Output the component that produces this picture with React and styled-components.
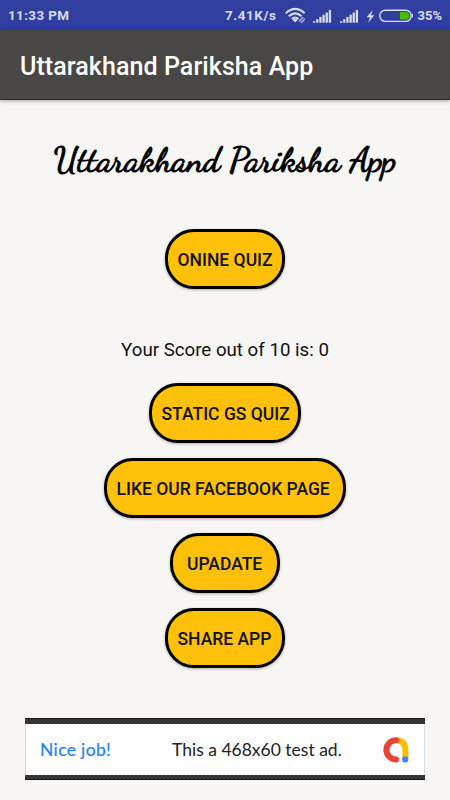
import React from 'react';
import styled, { createGlobalStyle } from 'styled-components';

const GlobalStyle = createGlobalStyle`
  * {
    box-sizing: border-box;
  }
  body {
    margin: 0;
    background: #f7f6f4;
    font-family: Roboto, "Liberation Sans", sans-serif;
  }
`
const SCREEN = styled.div`
  display: flex;
  flex-direction: column;
  width: 450px;
  height: 800px;
  overflow: hidden;
  background: #f7f6f4;
`
const STATUSBAR = styled.div`
  display: flex;
  flex: none;
  align-items: center;
  height: 30px;
  padding: 1px 8px 0 8px;
  background: #303f9f;
  color: #d9dcf0;
  font-size: 13.4px;
  font-weight: 700;
  white-space: nowrap;
`
const CLOCK = styled.div`
  flex: 1;
  letter-spacing: 0.4px;
`
const SPEED = styled.div`
  width: 60px;
  letter-spacing: 0.6px;
`
const STATUSICONS = styled.svg`
  display: block;
  width: 128px;
  height: 28px;
`
const PERCENT = styled.div`
  width: 29px;
  text-align: right;
  font-size: 13px;
`
const TOOLBAR = styled.header`
  display: flex;
  flex: none;
  align-items: center;
  height: 70px;
  padding: 4px 20px 0;
  background: #484745;
  border-bottom: 1px solid #2f2e2d;
  box-shadow: 0 1px 4px rgba(0, 0, 0, 0.35);
  color: white;
  font-size: 25px;
  font-weight: 500;
  letter-spacing: 0.08px;
  white-space: nowrap;
`
const CONTENT = styled.main`
  display: flex;
  flex: 1;
  flex-direction: column;
  align-items: center;
`
const TITLE = styled.h1`
  margin: 35px 0 0;
  height: 50px;
  font-family: "Dancing Script", "Liberation Serif", cursive;
  font-size: 35px;
  font-weight: 400;
  line-height: 50px;
  color: black;
  -webkit-text-stroke: 1px black;
  white-space: nowrap;
`
const SCORE = styled.p`
  margin: 49px 0 20px;
  height: 25px;
  font-size: 18.7px;
  line-height: 25px;
  color: #111;
  white-space: nowrap;
`
const BUTTON = styled.button`
  display: flex;
  align-items: center;
  justify-content: flex-start;
  flex: none;
  width: ${props => props.$width}px;
  height: 60px;
  padding: 1px 0 0 ${props => props.$indent || 9.5}px;
  border: 3.5px solid black;
  border-radius: 29px;
  background: #ffc107;
  box-shadow: 0 1px 3px rgba(0, 0, 0, 0.3);
  color: #111;
  font-family: Roboto, "Liberation Sans", sans-serif;
  font-size: 17.5px;
  font-weight: 500;
  white-space: nowrap;
`
const FIRSTBUTTON = styled(BUTTON)`
  margin-top: 44px;
`
const BUTTONLIST = styled.div`
  display: flex;
  flex-direction: column;
  align-items: center;
  gap: 15px;
`
const AD = styled.div`
  flex: none;
  width: 400px;
  height: 62px;
  margin-top: 50px;
  padding: 5px 0 4px;
  background: repeating-conic-gradient(#2b2b2b 0% 25%, #414141 0% 50%) 0 0 / 4px 4px;
  border-top: 1px solid #1a1a1a;
  border-bottom: 1px solid #1a1a1a;
`
const ADBODY = styled.div`
  display: flex;
  align-items: center;
  height: 100%;
  padding: 0 14px 0 14px;
  background: #fefefe;
  border: solid #d5dce1;
  border-width: 0 1px;
  font-family: Lato, "Liberation Sans", sans-serif;
  font-size: 17.5px;
  white-space: nowrap;
`
const ADLINK = styled.div`
  width: 132px;
  color: #2680f5;
  letter-spacing: 0.35px;
  -webkit-text-stroke: 0.2px #2680f5;
`
const ADTEXT = styled.div`
  flex: 1;
  color: #222;
`
const ADLOGO = styled.svg`
  display: block;
  width: 28px;
  height: 28px;
`

function StatusIcons() {
  return (
    <STATUSICONS viewBox="0 0 128 28" fill="none">
      <g stroke="#d9dcf0" strokeWidth="2">
        <path d="M0.8 11.2Q10.2 2.6 19.6 11.2" />
        <path d="M3.8 14.3Q10.2 8.4 16.6 14.3" />
        <path d="M6.8 17.1Q10.2 14 13.6 17.1" />
      </g>
      <path d="M7.5 17.8L10.2 20.5L12.9 17.8Q10.2 15.8 7.5 17.8Z" fill="#d9dcf0" />
      <path d="M14.4 19.3L17.9 15.6M16.4 20.4L19.4 17.2" stroke="#aab0dc" strokeWidth="1.5" strokeLinecap="round" />
      <SignalBars x={28} />
      <SignalBars x={55} />
      <path d="M87.8 8L81.6 15.3H85L83.2 20.8L89.3 13.2H86Z" fill="#d9dcf0" />
      <rect x="94.7" y="8.2" width="31.5" height="11.2" rx="5.6" stroke="#d9dcf0" strokeWidth="1.4" />
      <path d="M115 10H120.5A3.8 3.8 0 0 1 120.5 17.6H115Z" fill="#45bf08" />
      <path d="M127.3 12V15.6" stroke="#d9dcf0" strokeWidth="1.2" />
    </STATUSICONS>
  )
}

function SignalBars(props) {
  return (
    <g fill="#d9dcf0">
      {[1.5, 3.5, 5.8, 8, 10.2, 12.8].map((height, i) => (
        <rect key={i} x={props.x + i * 3.15} y={20.7 - height} width="2.3" height={height} />
      ))}
    </g>
  )
}

function AdLogo() {
  return (
    <ADLOGO viewBox="0 0 28 28" fill="none" strokeWidth="6" strokeLinecap="round">
      <path d="M14.2 4.2Q23.4 4.6 23.4 14.2V23" stroke="#fbbc04" strokeLinecap="butt" />
      <path d="M14 4.2A9.6 9.6 0 0 0 14 23.4" stroke="#ea4335" />
      <circle cx="23.2" cy="23.4" r="3.1" fill="#4285f4" />
    </ADLOGO>
  )
}

function App() {
  return (
    <SCREEN>
      <GlobalStyle />
      <STATUSBAR>
        <CLOCK>11:33 PM</CLOCK>
        <SPEED>7.41K/s</SPEED>
        <StatusIcons />
        <PERCENT>35%</PERCENT>
      </STATUSBAR>
      <TOOLBAR>Uttarakhand Pariksha App</TOOLBAR>
      <CONTENT>
        <TITLE>Uttarakhand Pariksha App</TITLE>
        <FIRSTBUTTON $width={120}>ONINE QUIZ</FIRSTBUTTON>
        <SCORE>Your Score out of 10 is: 0</SCORE>
        <BUTTONLIST>
          <BUTTON $width={152}>STATIC GS QUIZ</BUTTON>
          <BUTTON $width={242}>LIKE OUR FACEBOOK PAGE</BUTTON>
          <BUTTON $width={110} $indent={14}>UPADATE</BUTTON>
          <BUTTON $width={120}>SHARE APP</BUTTON>
        </BUTTONLIST>
        <AD>
          <ADBODY>
            <ADLINK>Nice job!</ADLINK>
            <ADTEXT>This a 468x60 test ad.</ADTEXT>
            <AdLogo />
          </ADBODY>
        </AD>
      </CONTENT>
    </SCREEN>
  )
}

export default App;
